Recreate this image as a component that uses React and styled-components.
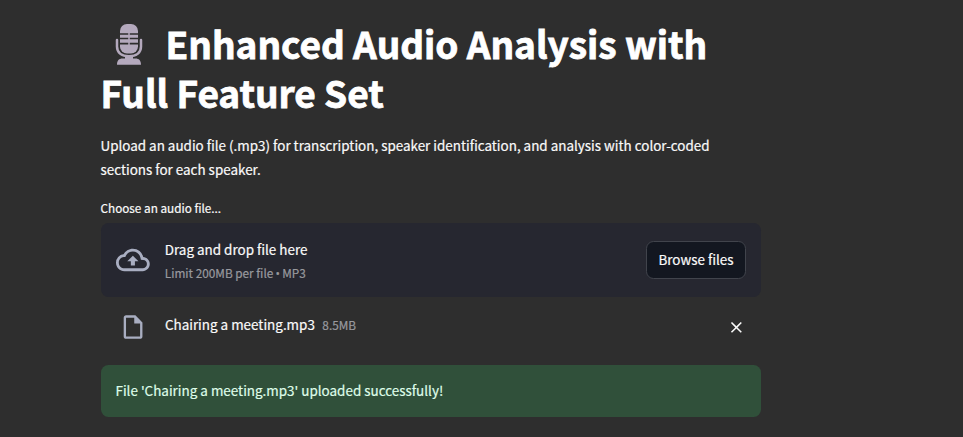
import React from "react";
import styled, { createGlobalStyle } from "styled-components";

const Global = createGlobalStyle`
  * { box-sizing: border-box; }
  html, body { margin: 0; background: #2e2e2e; overflow: hidden; }
  body {
    font-family: "Noto Sans CJK SC", "Source Sans Pro", "Noto Sans", sans-serif;
    color: #fafafa;
    -webkit-text-stroke: 0.2px currentColor;
  }
`;

const Page = styled.main`
  width: 660px;
  height: 437px;
  margin-left: 101px;
  padding-top: 19px;
`;

const Title = styled.h1`
  margin: 0 0 0 -0.5px;
  font-size: 37px;
  font-weight: 700;
  line-height: 49px;
  letter-spacing: -0.03px;
  color: #fff;
  -webkit-text-stroke: 0.8px currentColor;
`;

const TitleLine = styled.span`
  display: flex;
  align-items: flex-start;
  height: 49px;
  white-space: nowrap;
`;

const MicIcon = styled.svg`
  flex: none;
  width: 28px;
  height: 42px;
  margin: 5px 22.5px 0 14.5px;
`;

const Copy = styled.p`
  margin: 16px 0 0 -0.5px;
  font-size: 13.43px;
  line-height: 24px;
  white-space: nowrap;
`;

const Label = styled.div`
  margin: 15px 0 0 -0.5px;
  height: 27px;
  font-size: 11.75px;
  line-height: 24px;
`;

const Dropzone = styled.section`
  display: flex;
  align-items: center;
  height: 74px;
  padding: 0 15px;
  border-radius: 7.5px;
  background: #262730;
`;

const CloudIcon = styled.svg`
  flex: none;
  width: 33.75px;
  height: 33.75px;
  margin-right: 15px;
  fill: #a9aec1;
`;

const Instructions = styled.div`
  flex: 1;
  display: flex;
  flex-direction: column;
`;

const Primary = styled.span`
  font-size: 13.44px;
  line-height: 24px;
  white-space: nowrap;
`;

const Muted = styled.span`
  font-size: 11.8px;
  line-height: 23px;
  color: #999a9f;
  white-space: nowrap;
`;

const Bullet = styled.span`
  font-family: "Open Sans", "Noto Sans", sans-serif;
  line-height: 1;
  margin: 0 -0.4px;
`;

const BrowseButton = styled.button`
  width: 100px;
  height: 38px;
  padding: 0 0 2px;
  border: 1px solid #41444c;
  border-radius: 7.5px;
  background: #131720;
  color: #fafafa;
  font-family: inherit;
  font-size: 13.43px;
  line-height: 24px;
  -webkit-text-stroke: 0.2px currentColor;
`;

const FileRow = styled.div`
  display: flex;
  align-items: center;
  height: 60px;
  padding: 0 15px 0 17.6px;
`;

const FileIcon = styled.svg`
  flex: none;
  width: 28.125px;
  height: 28.125px;
  margin-right: 18.2px;
  fill: #a9aec1;
`;

const FileInfo = styled.div`
  flex: 1;
  display: flex;
  align-items: baseline;
  gap: 7.5px;
  margin-top: -6px;
`;

const CloseIcon = styled.svg`
  width: 18.75px;
  height: 18.75px;
  fill: #fafafa;
`;

const Success = styled.div`
  display: flex;
  align-items: center;
  height: 52px;
  margin-top: 8px;
  padding: 0 14.5px 2px;
  border-radius: 7.5px;
  background: #30503a;
  color: #dffde9;
  font-size: 13.44px;
  line-height: 24px;
`;

export default function App() {
  return (
    <>
      <Global />
      <Page>
        <Title>
          <TitleLine>
            <MicIcon viewBox="0 0 28 42">
              <rect x="5" y="0" width="18" height="29.5" rx="7" fill="#b4a9bd" />
              <path d="M5 10h18M5 14.5h18M5 19.7h18" stroke="#2e2e2e" strokeWidth="1.7" />
              <path d="M14 8v14" stroke="#b4a9bd" strokeWidth="1.5" />
              <path d="M2 16v6.5C2 29 7 32.2 14 32.2S26 29 26 22.5V16" fill="none" stroke="#b4a9bd" strokeWidth="2.5" strokeLinecap="round" />
              <path d="M10 33h8v1.5h2.5c3.5 0 5.5 2 5.5 6.2H2c0-4.2 2-6.2 5.5-6.2H10z" fill="#b4a9bd" />
            </MicIcon>
            Enhanced Audio Analysis with
          </TitleLine>
          <TitleLine>Full Feature Set</TitleLine>
        </Title>
        <Copy>
          Upload an audio file (.mp3) for transcription, speaker identification, and analysis with color-coded
          <br />
          sections for each speaker.
        </Copy>
        <Label>Choose an audio file...</Label>
        <Dropzone>
          <CloudIcon viewBox="0 0 24 24">
            <path d="M19.35 10.04A7.49 7.49 0 0012 4C9.11 4 6.6 5.64 5.35 8.04A5.994 5.994 0 000 14c0 3.31 2.69 6 6 6h13c2.76 0 5-2.24 5-5 0-2.64-2.05-4.78-4.65-4.96zM19 18H6c-2.21 0-4-1.79-4-4 0-2.05 1.53-3.76 3.56-3.97l1.07-.11.5-.95A5.469 5.469 0 0112 6c2.62 0 4.88 1.86 5.39 4.43l.3 1.5 1.53.11A2.98 2.98 0 0122 15c0 1.65-1.35 3-3 3zM8 13h2.55v3h2.9v-3H16l-4-4-4 4z" />
          </CloudIcon>
          <Instructions>
            <Primary>Drag and drop file here</Primary>
            <Muted>
              Limit 200MB per file <Bullet>•</Bullet> MP3
            </Muted>
          </Instructions>
          <BrowseButton>Browse files</BrowseButton>
        </Dropzone>
        <FileRow>
          <FileIcon viewBox="0 0 24 24">
            <path d="M14 2H6c-1.1 0-1.99.9-1.99 2L4 20c0 1.1.89 2 1.99 2H18c1.1 0 2-.9 2-2V8l-6-6zM6 20V4h7v5h5v11H6z" />
          </FileIcon>
          <FileInfo>
            <Primary>Chairing a meeting.mp3</Primary>
            <Muted>8.5MB</Muted>
          </FileInfo>
          <CloseIcon viewBox="0 0 24 24">
            <path d="M19 6.41L17.59 5 12 10.59 6.41 5 5 6.41 10.59 12 5 17.59 6.41 19 12 13.41 17.59 19 19 17.59 13.41 12z" />
          </CloseIcon>
        </FileRow>
        <Success>File 'Chairing a meeting.mp3' uploaded successfully!</Success>
      </Page>
    </>
  );
}
